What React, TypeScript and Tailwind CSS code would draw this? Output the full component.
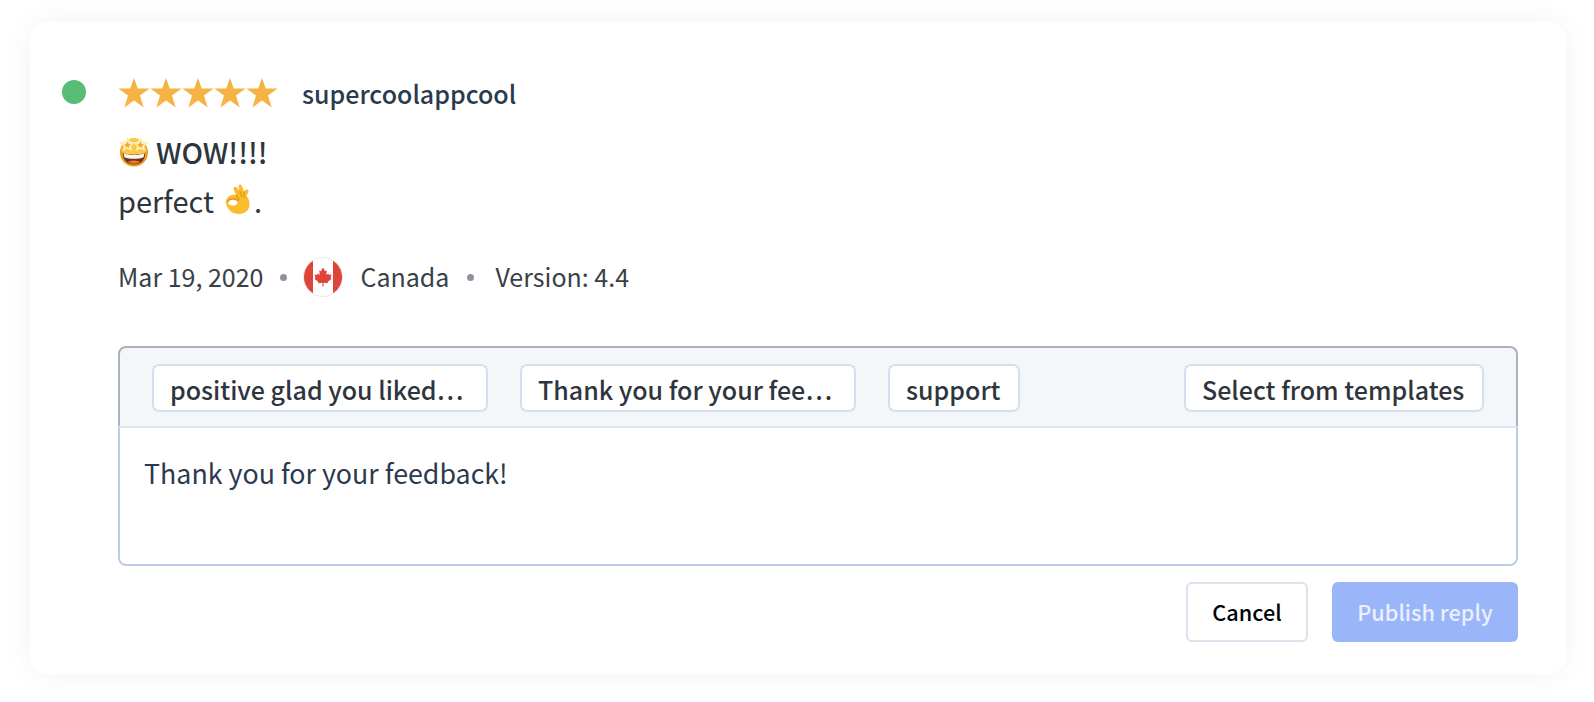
import React from 'react';

const FONT = 'font-["Noto_Sans_CJK_SC","Source_Sans_Pro",sans-serif]';

const Star = () => (
  <svg width="32" height="30" viewBox="0 0 32 30" className="shrink-0">
    <polygon points="16,0 19.8,10.6 31.6,10.6 22,17.6 25.6,29.4 16,22.4 6.4,29.4 10,17.6 0.4,10.6 12.2,10.6" fill="#f6b343" />
  </svg>
);

const StarStruck = () => (
  <svg width="32" height="30" viewBox="0 0 32 30" className="shrink-0">
    <circle cx="16" cy="15.5" r="14" fill="#ee9a1f" />
    <circle cx="16" cy="13.5" r="12.4" fill="#fbc943" />
    <path d="M4.5 15.5 C10 18.5 22 18.5 27.5 15.5 C27 24 22 27.5 16 27.5 C10 27.5 5 24 4.5 15.5Z" fill="#6e3610" />
    <path d="M5.4 16 C11 18.8 21 18.8 26.6 16 L25.6 20.2 C21 22.2 11 22.2 6.4 20.2Z" fill="#f6f6f6" />
    <path d="M10 25 C13 23 19 23 22 25 C19 27.4 13 27.4 10 25Z" fill="#e8742c" />
    <polygon points="9.5,0 11.8,4.6 17,5.6 13,9 14,14 9.5,11.4 5,14 6,9 0,5.4 7.2,4.6" fill="#fdeec2" />
    <polygon points="22.5,0 24.8,4.6 32,5.4 26,9 27,14 22.5,11.4 18,14 19,9 15,5.6 20.2,4.6" fill="#fdeec2" />
    <polygon points="9.5,4.4 10.6,6.8 13,7.2 11,8.8 11.6,11 9.5,9.8 7.4,11 8,8.8 6,7.2 8.4,6.8" fill="#f4a928" />
    <polygon points="22.5,4.4 23.6,6.8 26,7.2 24,8.8 24.6,11 22.5,9.8 20.4,11 21,8.8 19,7.2 21.4,6.8" fill="#f4a928" />
  </svg>
);

const OkHand = () => (
  <svg width="26" height="32" viewBox="0 0 26 32" className="shrink-0">
    <path d="M1 17 C2 12 7 10 11 11 L8.6 5.4 C8 3.2 10.4 2 12 3.6 L14.4 6.6 L13.6 2.2 C13.4 0 16 -0.2 17 2 L19 7.4 L21 5.6 C22.6 4.8 24 6.4 23.4 8 L21.6 12 C24.2 15 25.2 19 24.2 23 C22.6 29 16 31 10 29.6 C5 28 0.4 22 1 17Z" fill="#f9bd2e" />
    <ellipse cx="7.8" cy="18.4" rx="4.6" ry="3" fill="#fff" />
    <path d="M11.6 11.4 L14 16 M15 7.6 L17 13 M19 8 L19.4 13" fill="none" stroke="#dc8f1a" strokeWidth="1.1" strokeLinecap="round" />
    <path d="M3 17.4 C4.6 14.4 9.6 13.8 12.6 16.6" fill="none" stroke="#dc8f1a" strokeWidth="1.2" strokeLinecap="round" />
  </svg>
);

const CanadaFlag = () => (
  <svg width="40" height="40" viewBox="0 0 42 42" className="shrink-0">
    <defs>
      <clipPath id="flag-round">
        <circle cx="21" cy="21" r="20" />
      </clipPath>
    </defs>
    <circle cx="21" cy="21" r="20.5" fill="#fff" stroke="#e8e8e8" />
    <g clipPath="url(#flag-round)">
      <rect x="0" y="0" width="10.5" height="42" fill="#de4437" />
      <rect x="31.5" y="0" width="10.5" height="42" fill="#de4437" />
    </g>
    <path d="M21 11 L23.2 15 L25 14.2 L24.4 19 L26.6 17.2 L27.2 19 L30 18.4 L29 21.8 L30 22.8 L25.8 26.2 L26.2 27.6 L21.6 27 L21.6 31 L20.4 31 L20.4 27 L15.8 27.6 L16.2 26.2 L12 22.8 L13 21.8 L12 18.4 L14.8 19 L15.4 17.2 L17.6 19 L17 14.2 L18.8 15 Z" fill="#de4437" />
  </svg>
);

const Dot = ({ className }: { className: string }) => (
  <span className={`h-[7px] w-[7px] shrink-0 rounded-full bg-[#8b939c] ${className}`}></span>
);

const Chip = ({ label, width }: { label: string; width: string }) => (
  <button className={`h-[48px] ${width} rounded-[7px] border-2 border-[#d3deee] bg-white pl-[16px] text-left text-[25px] font-medium whitespace-nowrap text-[#2f353d]`}>
    <span className="block leading-[46px]">{label}</span>
  </button>
);

export default function App() {
  return (
    <div className={`h-[702px] w-[1594px] overflow-hidden bg-white pt-[22px] pl-[30px] ${FONT}`}>
      <div className="h-[652px] w-[1536px] rounded-[18px] bg-white pt-[56px] pl-[32px] shadow-[0_0_28px_rgba(0,0,0,0.055)]">
        {/* Header */}
        <div className="flex h-[30px] items-center">
          <span className="mr-[32px] -mt-[2px] h-[24px] w-[24px] rounded-full bg-[#57bd74]"></span>
          <div className="flex w-[184px] items-center">
            <Star /><Star /><Star /><Star /><Star />
          </div>
          <span className="text-[25px] leading-[30px] font-medium text-[#2b3a4d]">supercoolappcool</span>
        </div>

        {/* Review body */}
        <div className="ml-[56px]">
          <div className="mt-[29px] flex h-[30px] items-center gap-[6px] text-[28.6px] leading-[30px] font-medium text-[#2f353d]">
            <StarStruck />
            <span>WOW!!!!</span>
          </div>
          <div className="mt-[17px] flex h-[32px] items-center text-[29px] leading-[30px] text-[#2f353d]">
            <span>perfect</span>
            <span className="mr-[3px] ml-[11px]"><OkHand /></span>
            <span>.</span>
          </div>

          <div className="mt-[41px] flex h-[40px] items-center text-[25px] leading-[38px] text-[#3a4047]">
            <span className="-translate-y-[1px]">Mar 19, 2020</span>
            <Dot className="mr-[16px] ml-[17px]" />
            <CanadaFlag />
            <span className="ml-[17px] -translate-y-[1px]">Canada</span>
            <Dot className="mr-[21px] ml-[18px]" />
            <span className="-translate-y-[1px]">Version: 4.4</span>
          </div>

          {/* Reply box */}
          <div className="mt-[49px] w-[1400px]">
            <div className="flex h-[80px] items-start justify-between rounded-t-[8px] border-2 border-b-0 border-[#aab2bc] bg-[#f4f6fa] pt-[16px] pr-[32px] pl-[32px]">
              <div className="flex gap-[32px]">
                <Chip label="positive glad you liked…" width="w-[336px]" />
                <Chip label="Thank you for your fee…" width="w-[336px]" />
                <Chip label="support" width="w-[132px]" />
              </div>
              <Chip label="Select from templates" width="w-[300px]" />
            </div>
            <div className="h-[140px] rounded-b-[8px] border-2 border-[#bccce8] border-t-[#dce6f7] bg-white pt-[25px] pl-[24px] text-[26.8px] leading-[40px] text-[#2b3a4d]">
              Thank you for your feedback!
            </div>
          </div>

          {/* Actions */}
          <div className="mt-[16px] flex w-[1400px] justify-end gap-[24px]">
            <button className="h-[60px] w-[122px] rounded-[6px] border-2 border-[#dde2ef] bg-white text-[21.7px] leading-[52px] font-medium text-black">
              Cancel
            </button>
            <button className="h-[60px] w-[186px] rounded-[6px] bg-[#9bb5f9] text-[21.7px] leading-[56px] font-medium text-[#eaf0fe]">
              Publish reply
            </button>
          </div>
        </div>
      </div>
    </div>
  );
}
